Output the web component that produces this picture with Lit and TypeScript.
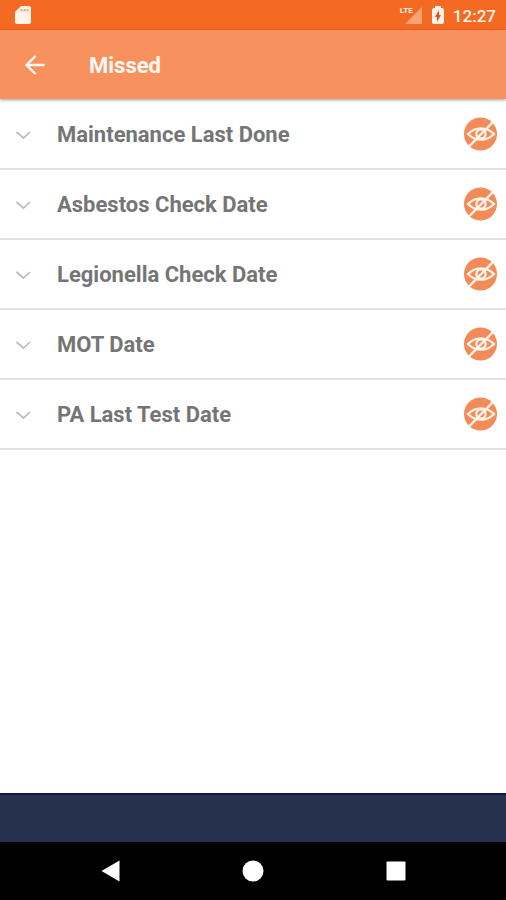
import { LitElement, html, css } from "lit";
import { customElement, property, state } from "lit/decorators.js";

@customElement("status-bar")
class StatusBar extends LitElement {
  static styles = css`
    :host {
      display: flex;
      align-items: center;
      height: 30px;
      padding: 0 10px 0 14px;
      background: #f56a22;
      color: #fff4ec;
      font-size: 17px;
      font-weight: 500;
      line-height: 20px;
    }
    svg {
      display: block;
    }
    .spacer {
      flex: 1;
    }
    .signal {
      position: relative;
      width: 23px;
      height: 20px;
      margin-right: 9px;
    }
    .lte {
      position: absolute;
      left: 0;
      top: 0;
      font-size: 8px;
      font-weight: 700;
      line-height: 12px;
    }
    .battery {
      margin-right: 9px;
    }
    .time {
      padding-top: 2px;
    }
  `;

  render() {
    return html`
      <svg width="18" height="20" viewBox="0 0 18 20" aria-hidden="true">
        <path fill="#fff4ec" d="M7 1h8q2 0 2 2v14q0 2-2 2H3q-2 0-2-2V7z" />
        <path stroke="#f9a678" stroke-width="2" d="M7.500 4v2.500M10.500 4v2.500M13.500 4v2.500" />
      </svg>
      <span class="spacer"></span>
      <span class="signal">
        <svg width="23" height="20" viewBox="0 0 23 20" aria-hidden="true">
          <path fill="#f9a375" d="M22 2v17H5z" />
        </svg>
        <span class="lte">LTE</span>
      </span>
      <svg class="battery" width="12" height="20" viewBox="0 0 12 20" aria-hidden="true">
        <path fill="#fff4ec" d="M3 1h6v2h1q2 0 2 2v12q0 2-2 2H2q-2 0-2-2V5q0-2 2-2h1z" />
        <path fill="#e8501c" d="M7 5 3 12h2v5l4-7H7z" />
      </svg>
      <span class="time">12:27</span>
    `;
  }
}

@customElement("missed-row")
class MissedRow extends LitElement {
  @property() label = "";
  @state() open = false;

  static styles = css`
    :host {
      display: flex;
      align-items: center;
      box-sizing: border-box;
      height: 70px;
      border-bottom: 2px solid #e1e1e1;
      padding-right: 9px;
    }
    button {
      display: flex;
      align-items: center;
      border: 0;
      padding: 0;
      background: none;
      color: #757575;
      font: inherit;
      cursor: pointer;
    }
    .toggle {
      flex: 1;
      gap: 26px;
      height: 100%;
      padding: 2px 0 0 15px;
      font-size: 22px;
      font-weight: 700;
      line-height: 28px;
      text-align: left;
    }
    svg {
      display: block;
    }
  `;

  render() {
    return html`
      <button
        class="toggle"
        aria-expanded=${this.open ? "true" : "false"}
        @click=${() => (this.open = !this.open)}
      >
        <svg width="16" height="10" viewBox="0 0 16 10" aria-hidden="true">
          <path fill="none" stroke="#bcbcbc" stroke-width="1.700" d="m1.500 2 7 6L15 2" />
        </svg>
        <span>${this.label}</span>
      </button>
      <button aria-label="Hide ${this.label}">
        <svg width="33" height="34" viewBox="0 0 33 34" aria-hidden="true">
          <circle cx="16.500" cy="17" r="16.500" fill="#f38b58" />
          <g fill="none" stroke="#fff3ea" stroke-width="2.300">
            <path d="M4 17Q9.500 11.300 17 11.300T30 17Q24.500 22.700 17 22.700T4 17z" />
            <circle cx="17" cy="17" r="4.600" />
          </g>
          <path stroke="#fff3ea" stroke-width="2.500" d="M5 29.500 29 5" />
        </svg>
      </button>
    `;
  }
}

@customElement("app-root")
class AppRoot extends LitElement {
  static styles = css`
    :host {
      display: flex;
      flex-direction: column;
      min-height: 100vh;
      background: #fff;
      font-family: Roboto, sans-serif;
    }
    header {
      display: flex;
      align-items: center;
      gap: 43px;
      height: 69px;
      padding-left: 24px;
      background: #f9915e;
      color: #fffaf5;
      box-shadow: 0 1px 3px rgba(0, 0, 0, 0.4);
      z-index: 1;
    }
    h1 {
      margin: 0;
      padding-top: 2px;
      font-size: 22px;
      font-weight: 700;
      line-height: 28px;
    }
    button {
      display: flex;
      border: 0;
      padding: 0;
      background: none;
      color: inherit;
      cursor: pointer;
    }
    main {
      flex: 1;
      padding-top: 1px;
    }
    .strip {
      height: 47px;
      border-top: 2px solid #10164a;
      background: #26304f;
    }
    nav {
      display: grid;
      grid-template-columns: repeat(3, 1fr);
      align-items: center;
      height: 58px;
      padding: 0 39px;
      background: #000;
      color: #fff;
    }
    nav button {
      justify-self: center;
    }
  `;

  private labels = [
    "Maintenance Last Done",
    "Asbestos Check Date",
    "Legionella Check Date",
    "MOT Date",
    "PA Last Test Date",
  ];

  render() {
    return html`
      <status-bar></status-bar>
      <header>
        <button aria-label="Back">
          <svg width="22" height="22" viewBox="0 0 22 22" aria-hidden="true">
            <path fill="none" stroke="currentColor" stroke-width="2.400" d="M20.500 11H3M11.500 2 2.500 11l9 9" />
          </svg>
        </button>
        <h1>Missed</h1>
      </header>
      <main>${this.labels.map((label) => html`<missed-row .label=${label}></missed-row>`)}</main>
      <div class="strip"></div>
      <nav>
        <button aria-label="Back">
          <svg width="22" height="22" viewBox="0 0 22 22" aria-hidden="true">
            <path fill="currentColor" d="M20.500 0.500v21L2.500 11z" />
          </svg>
        </button>
        <button aria-label="Home">
          <svg width="22" height="22" viewBox="0 0 22 22" aria-hidden="true">
            <circle cx="11" cy="11" r="10.500" fill="currentColor" />
          </svg>
        </button>
        <button aria-label="Recent apps">
          <svg width="22" height="22" viewBox="0 0 22 22" aria-hidden="true">
            <rect x="1.500" y="1.500" width="19" height="19" rx="1" fill="currentColor" />
          </svg>
        </button>
      </nav>
    `;
  }
}
